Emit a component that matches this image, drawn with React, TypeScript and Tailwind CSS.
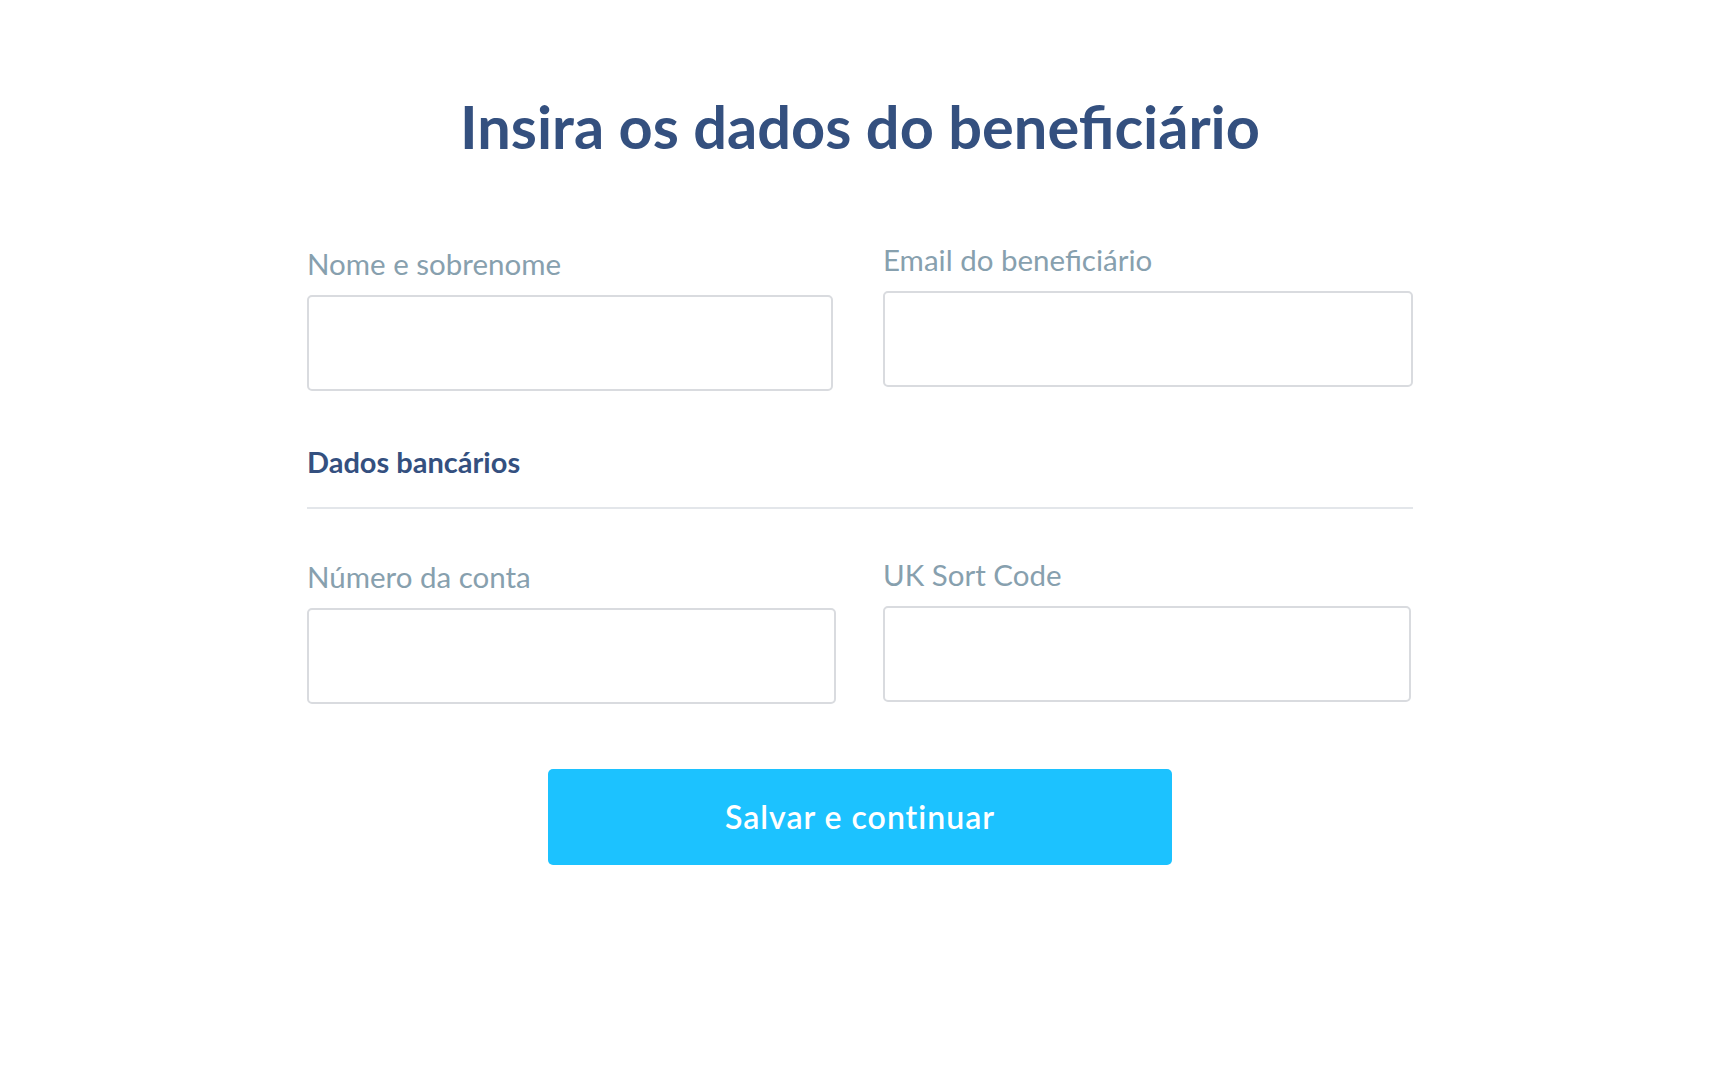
import { useState } from 'react';

type Field = { key: string; label: string; width: string; shift?: string };

const topFields: Field[] = [
  { key: 'name', label: 'Nome e sobrenome', width: 'w-[526px]' },
  { key: 'email', label: 'Email do beneficiário', width: 'w-[530px]', shift: '-mt-1' },
];

const bankFields: Field[] = [
  { key: 'account', label: 'Número da conta', width: 'w-[529px]' },
  { key: 'sortCode', label: 'UK Sort Code', width: 'w-[528px]', shift: '-mt-[2px] mr-[2px]' },
];

function FormField({ field, value, onChange }: { field: Field; value: string; onChange: (v: string) => void }) {
  return (
    <div className={`${field.width} ${field.shift ?? ''}`}>
      <label className="block text-[29.5px] leading-[34px] text-[#87a0ae] mb-[14px]">{field.label}</label>
      <input
        type="text"
        value={value}
        onChange={e => onChange(e.target.value)}
        className="block w-full h-[96px] border-2 border-[#d9dbdf] rounded-[5px] px-4 text-[26px] text-[#34507f] outline-none"
      />
    </div>
  );
}

export default function App() {
  const [form, setForm] = useState<Record<string, string>>({});

  const setField = (key: string) => (v: string) => setForm({ ...form, [key]: v });

  return (
    <div className="min-h-screen bg-white font-['Lato','Open_Sans',sans-serif]">
      <div className="mx-auto w-[1106px] pt-[97px]">
        <h1 className="text-center text-[59.5px] leading-none font-bold text-[#34507f]">
          Insira os dados do beneficiário
        </h1>

        <div className="mt-[90px] flex justify-between items-start">
          {topFields.map(f => (
            <FormField key={f.key} field={f} value={form[f.key] ?? ''} onChange={setField(f.key)} />
          ))}
        </div>

        <h2 className="mt-[55px] text-[29px] leading-[32px] font-bold text-[#34507f]">Dados bancários</h2>
        <div className="mt-[29px] h-[2px] bg-[#e3e6ea]"></div>

        <div className="mt-[51px] flex justify-between items-start">
          {bankFields.map(f => (
            <FormField key={f.key} field={f} value={form[f.key] ?? ''} onChange={setField(f.key)} />
          ))}
        </div>

        <div className="mt-[65px] flex justify-center">
          <button className="w-[624px] h-[96px] rounded-[5px] bg-[#1cc2ff] text-white text-[32px] font-semibold tracking-[1px] hover:bg-[#12b6f2]">
            Salvar e continuar
          </button>
        </div>
      </div>
    </div>
  );
}
